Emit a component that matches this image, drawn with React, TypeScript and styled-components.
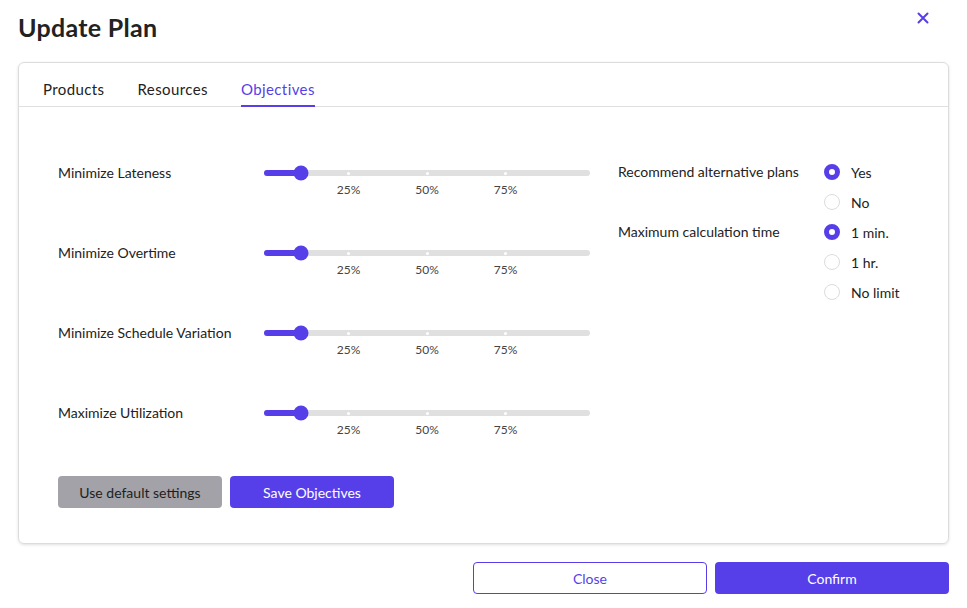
import styled, { createGlobalStyle } from "styled-components";

const PURPLE = "#563fe8";

const objectives = [
  { label: "Minimize Lateness", value: 10 },
  { label: "Minimize Overtime", value: 10 },
  { label: "Minimize Schedule Variation", value: 10 },
  { label: "Maximize Utilization", value: 10 },
];

const ticks = [25, 50, 75];

export default function App() {
  return (
    <>
      <GlobalStyle />
      <Page>
        <Header>
          <Title>Update Plan</Title>
          <CloseIcon aria-label="close">
            <svg width="12" height="12" viewBox="0 0 12 12">
              <path d="M1.5 1.5 L10.5 10.5 M10.5 1.5 L1.5 10.5" stroke={PURPLE} strokeWidth="2" strokeLinecap="round" />
            </svg>
          </CloseIcon>
        </Header>

        <Card>
          <Tabs>
            <Tab>Products</Tab>
            <Tab>Resources</Tab>
            <Tab $active>Objectives</Tab>
          </Tabs>

          <Body>
            <LeftColumn>
              {objectives.map((o) => (
                <SliderRow key={o.label}>
                  <RowLabel>{o.label}</RowLabel>
                  <Slider>
                    <Track>
                      <Fill style={{ width: `calc(6px + (100% - 12px) * ${o.value / 100})` }} />
                      {ticks.map((t) => (
                        <Tick key={t} style={{ left: `calc(6px + (100% - 12px) * ${t / 100})` }} />
                      ))}
                      <Thumb style={{ left: `calc(6px + (100% - 12px) * ${o.value / 100})` }} />
                    </Track>
                    <TickLabels>
                      {ticks.map((t) => (
                        <TickLabel key={t} style={{ left: `calc(6px + (100% - 12px) * ${t / 100})` }}>
                          {t}%
                        </TickLabel>
                      ))}
                    </TickLabels>
                  </Slider>
                </SliderRow>
              ))}

              <Actions>
                <GrayButton>Use default settings</GrayButton>
                <PrimaryButton>Save Objectives</PrimaryButton>
              </Actions>
            </LeftColumn>

            <RightColumn>
              <OptionGroup>
                <OptionLabel>Recommend alternative plans</OptionLabel>
                <Radios>
                  <Radio $checked>Yes</Radio>
                  <Radio>No</Radio>
                </Radios>
              </OptionGroup>
              <OptionGroup>
                <OptionLabel>Maximum calculation time</OptionLabel>
                <Radios>
                  <Radio $checked>1 min.</Radio>
                  <Radio>1 hr.</Radio>
                  <Radio>No limit</Radio>
                </Radios>
              </OptionGroup>
            </RightColumn>
          </Body>
        </Card>

        <Footer>
          <OutlineButton>Close</OutlineButton>
          <ConfirmButton>Confirm</ConfirmButton>
        </Footer>
      </Page>
    </>
  );
}

function Radio({ children, $checked }: { children: string; $checked?: boolean }) {
  return (
    <RadioRow>
      <RadioDot $checked={$checked} />
      <span>{children}</span>
    </RadioRow>
  );
}

const GlobalStyle = createGlobalStyle`
  body {
    margin: 0;
    background: #ffffff;
    font-family: "Lato", "Noto Sans", sans-serif;
    color: #222222;
  }
`;

const Page = styled.div`
  width: 967px;
  height: 608px;
  box-sizing: border-box;
  padding: 0 18px;
  display: flex;
  flex-direction: column;
`;

const Header = styled.div`
  height: 62px;
  display: flex;
  justify-content: space-between;
  align-items: flex-start;
`;

const Title = styled.h1`
  margin: 12px 0 0;
  font-size: 25px;
  font-weight: 700;
  color: #222;
  letter-spacing: 0.3px;
`;

const CloseIcon = styled.div`
  margin: 12px 20px 0 0;
  width: 12px;
  height: 12px;
  display: flex;
`;

const Card = styled.div`
  height: 482px;
  box-sizing: border-box;
  border: 1px solid #dcdcdc;
  border-radius: 6px;
  box-shadow: 0 1px 3px rgba(0, 0, 0, 0.12);
  display: flex;
  flex-direction: column;
`;

const Tabs = styled.div`
  display: flex;
  gap: 33px;
  padding: 0 24px;
  height: 43px;
  border-bottom: 1px solid #e0e0e0;
`;

const Tab = styled.div<{ $active?: boolean }>`
  display: flex;
  align-items: center;
  padding-top: 10px;
  box-sizing: border-box;
  font-size: 15px;
  letter-spacing: 0.4px;
  color: ${(p) => (p.$active ? PURPLE : "#222")};
  border-bottom: 2px solid ${(p) => (p.$active ? PURPLE : "transparent")};
  margin-bottom: -1px;
`;

const Body = styled.div`
  display: flex;
  padding: 58px 0 0 39px;
`;

const LeftColumn = styled.div`
  width: 532px;
  display: flex;
  flex-direction: column;
`;

const SliderRow = styled.div`
  display: flex;
  height: 80px;
`;

const RowLabel = styled.div`
  width: 206px;
  font-size: 14px;
  line-height: 16px;
  color: #222;
`;

const Slider = styled.div`
  width: 326px;
  padding-top: 5px;
`;

const Track = styled.div`
  position: relative;
  height: 6px;
  border-radius: 3px;
  background: #e0e0e0;
`;

const Fill = styled.div`
  height: 100%;
  border-radius: 3px;
  background: ${PURPLE};
`;

const Tick = styled.div`
  position: absolute;
  top: 1.5px;
  width: 3px;
  height: 3px;
  margin-left: -1.5px;
  border-radius: 50%;
  background: #ffffff;
`;

const Thumb = styled.div`
  position: absolute;
  top: 50%;
  width: 15px;
  height: 15px;
  border-radius: 50%;
  background: ${PURPLE};
  transform: translate(-50%, -50%);
`;

const TickLabels = styled.div`
  position: relative;
  height: 16px;
  margin-top: 6px;
`;

const TickLabel = styled.span`
  position: absolute;
  top: 0;
  transform: translateX(-50%);
  font-size: 12px;
  color: #444;
`;

const Actions = styled.div`
  display: flex;
  gap: 8px;
  margin-top: -9px;
`;

const BaseButton = styled.button`
  width: 164px;
  height: 32px;
  border: none;
  border-radius: 4px;
  font-family: inherit;
  font-size: 14px;
  cursor: pointer;
`;

const GrayButton = styled(BaseButton)`
  background: #a2a2a8;
  color: #1e1e1e;
`;

const PrimaryButton = styled(BaseButton)`
  background: ${PURPLE};
  color: #ffffff;
`;

const RightColumn = styled.div`
  display: flex;
  flex-direction: column;
  margin-left: 28px;
  margin-top: -1px;
`;

const OptionGroup = styled.div`
  display: flex;
`;

const OptionLabel = styled.div`
  width: 206px;
  font-size: 14px;
  line-height: 30px;
  margin-top: -7px;
  color: #222;
`;

const Radios = styled.div`
  display: flex;
  flex-direction: column;
  margin-top: -7px;
  margin-bottom: 7px;
`;

const RadioRow = styled.label`
  display: flex;
  align-items: center;
  gap: 11px;
  height: 30px;
  font-size: 14px;
  color: #222;
`;

const RadioDot = styled.span<{ $checked?: boolean }>`
  width: 16px;
  height: 16px;
  box-sizing: border-box;
  border-radius: 50%;
  border: ${(p) => (p.$checked ? `5px solid ${PURPLE}` : "1px solid #dcdcdc")};
  background: #ffffff;
`;

const Footer = styled.div`
  display: flex;
  justify-content: flex-end;
  gap: 8px;
  margin-top: 18px;
`;

const OutlineButton = styled(BaseButton)`
  width: 234px;
  background: #ffffff;
  color: ${PURPLE};
  border: 1px solid ${PURPLE};
`;

const ConfirmButton = styled(BaseButton)`
  width: 234px;
  background: ${PURPLE};
  color: #ffffff;
`;
